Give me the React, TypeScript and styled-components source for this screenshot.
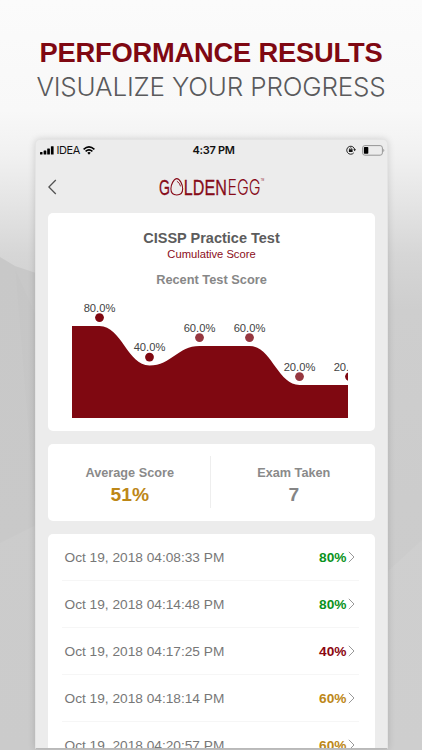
import React from "react";
import styled, { createGlobalStyle } from "styled-components";

const GlobalStyle = createGlobalStyle`
  * { box-sizing: border-box; }
  html, body { margin: 0; padding: 0; overflow: hidden; }
  body { font-family: "Liberation Sans", Arial, sans-serif; }
`;

const Page = styled.main`
  position: relative;
  width: 422px;
  height: 750px;
  overflow: hidden;
  display: flex;
  flex-direction: column;
  align-items: center;
  background: linear-gradient(180deg, #fbfbfb 0, #f8f8f8 110px, #f1f1f1 155px, #e4e4e4 205px, #d6d6d6 255px, #cecece 310px, #cccccc 500px, #cbcbcb 750px);
`;

const Backdrop = styled.svg`
  position: absolute;
  inset: 0;
`;

const Heading = styled.header`
  position: relative;
  height: 139px;
  padding-top: 36px;
  display: flex;
  flex-direction: column;
  align-items: center;
  flex: none;
  white-space: nowrap;
`;

const Title = styled.h1`
  margin: 0;
  font-size: 27.3px;
  line-height: 34px;
  letter-spacing: -0.2px;
  font-weight: 700;
  color: #7f0812;
`;

const Subtitle = styled.p`
  margin: 0;
  font-family: Inter, "Liberation Sans", sans-serif;
  font-weight: 300;
  font-size: 26px;
  line-height: 34px;
  letter-spacing: -0.17px;
  color: #5a5a5c;
`;

const Phone = styled.section`
  position: relative;
  width: 353px;
  height: 610px;
  flex: none;
  overflow: hidden;
  padding: 0 12px;
  display: flex;
  flex-direction: column;
  border: 1px solid #e4e4e4;
  border-bottom: 1px solid #b9b9b9;
  border-radius: 5px 5px 0 0;
  background: #ececec;
  box-shadow: 0 0 7px rgba(0, 0, 0, 0.15);
`;

const StatusBar = styled.div`
  height: 20px;
  flex: none;
  margin: 0 -10px;
  display: grid;
  grid-template-columns: 1fr auto 1fr;
  align-items: center;
  color: #111;
  font: 400 11px/20px Inter, sans-serif;
`;

const Carrier = styled.div`
  display: flex;
  align-items: center;
  gap: 3px;
  padding-left: 2px;
`;

const CarrierName = styled.span`
  letter-spacing: -0.4px;
`;

const Time = styled.time`
  font-weight: 600;
  font-size: 11px;
  margin-left: 5px;
  letter-spacing: -0.3px;
`;

const Indicators = styled.div`
  display: flex;
  align-items: center;
  justify-content: flex-end;
  gap: 6px;
`;

const NavBar = styled.nav`
  height: 53px;
  flex: none;
  display: grid;
  grid-template-columns: 24px 1fr 24px;
  align-items: center;
`;

const BackButton = styled.button`
  border: 0;
  padding: 0;
  background: none;
  display: flex;
`;

const Logo = styled.svg`
  justify-self: center;
  overflow: visible;
`;

const Card = styled.section<{ $height: number; $last?: boolean }>`
  height: ${(p) => p.$height}px;
  flex: none;
  margin-bottom: 13px;
  background: #fff;
  border-radius: ${(p) => (p.$last ? "5px 5px 0 0" : "5px")};
  overflow: hidden;
`;

const ChartCard = styled(Card)`
  display: flex;
  flex-direction: column;
  align-items: center;
  padding-top: 16px;
`;

const TestName = styled.h2`
  margin: 0 0 0 1px;
  font-size: 14.5px;
  line-height: 19px;
  color: #5c5c5c;
`;

const TestKind = styled.div`
  margin-left: 1px;
  font-size: 11.2px;
  line-height: 12px;
  color: #8b0d19;
`;

const ChartTitle = styled.h3`
  margin: 12px 0 0 1px;
  font-size: 12.8px;
  line-height: 16px;
  color: #878787;
`;

const Chart = styled.svg`
  margin-top: 12px;
  margin-right: 3px;
  display: block;
`;

const Stats = styled(Card)`
  display: grid;
  grid-template-columns: 1fr 1fr;
  padding: 12px 0 13px;
`;

const Stat = styled.div<{ $divided?: boolean }>`
  display: flex;
  flex-direction: column;
  align-items: center;
  padding-top: 9px;
  padding-left: 2px;
  border-right: ${(p) => (p.$divided ? "1px solid #eeeeee" : "0")};
`;

const StatLabel = styled.div`
  font-weight: 700;
  font-size: 12.7px;
  line-height: 16px;
  color: #8a8a8a;
`;

const StatValue = styled.div<{ $color: string }>`
  margin-top: 3px;
  font-weight: 700;
  font-size: 19.2px;
  line-height: 22px;
  color: ${(p) => p.$color};
`;

const Row = styled.div`
  height: 47px;
  margin: 0 16px 0 14px;
  padding: 0 4px 0 3px;
  display: flex;
  align-items: center;
  border-bottom: 1px solid #f6f6f6;
`;

const TakenAt = styled.span`
  flex: 1;
  font-size: 13.7px;
  color: #777;
`;

const Score = styled.span<{ $color: string }>`
  font-weight: 700;
  font-size: 13.7px;
  margin-right: 1px;
  color: ${(p) => p.$color};
`;

const points = [
  { x: 27.5, y: 26, label: "80.0%", faded: false },
  { x: 77.5, y: 65.5, label: "40.0%", faded: false },
  { x: 127.5, y: 46, label: "60.0%", faded: true },
  { x: 177.5, y: 46, label: "60.0%", faded: true },
  { x: 227.5, y: 85, label: "20.0%", faded: true },
  { x: 277.5, y: 85, label: "20.0%", faded: false },
];

const areaPath =
  `M0 118V26H${points[0].x}` +
  points
    .slice(1)
    .map((p, i) => `C${points[i].x + 22} ${points[i].y} ${p.x - 22} ${p.y} ${p.x} ${p.y}`)
    .join("") +
  "V118Z";

const attempts = [
  { time: "Oct 19, 2018 04:08:33 PM", score: "80%", color: "#0a931c" },
  { time: "Oct 19, 2018 04:14:48 PM", score: "80%", color: "#0a931c" },
  { time: "Oct 19, 2018 04:17:25 PM", score: "40%", color: "#8b0610" },
  { time: "Oct 19, 2018 04:18:14 PM", score: "60%", color: "#bd8717" },
  { time: "Oct 19, 2018 04:20:57 PM", score: "60%", color: "#bd8717" },
];

function GoldenEggLogo() {
  return (
    <Logo width="106" height="28" viewBox="0 0 106 28" fill="#870b19" fontFamily="Liberation Sans, Arial, sans-serif" fontSize="22.5">
      <text x="1" y="22.3" textLength="11" lengthAdjust="spacingAndGlyphs" stroke="#870b19" strokeWidth=".3">G</text>
      <path d="M18.8 5.6C15.8 5.6 12.9 11.6 12.9 15.8C12.9 19.6 15.3 22 18.8 22S24.7 19.6 24.7 15.8C24.7 11.6 21.8 5.6 18.8 5.6Z" fill="none" stroke="#870b19" strokeWidth="1.1" />
      <path d="M18.9 8.2Q21.8 9.7 22.6 13.4" fill="none" stroke="#870b19" strokeWidth=".9" />
      <text x="25.8" y="22.3" textLength="43" lengthAdjust="spacingAndGlyphs" stroke="#870b19" strokeWidth=".3">LDEN</text>
      <text x="69.6" y="22.3" textLength="33" lengthAdjust="spacingAndGlyphs" fontFamily="Inter, sans-serif" fontWeight="300" fontSize="21.8">EGG</text>
      <text x="102.8" y="8.4" fontSize="3" textLength="3.2" lengthAdjust="spacingAndGlyphs">TM</text>
    </Logo>
  );
}

export default function App() {
  return (
    <>
      <GlobalStyle />
      <Page>
        <Backdrop width="422" height="750" viewBox="0 0 422 750">
          <defs>
            <linearGradient id="facet" x1="0" y1="0" x2="0" y2="1">
              <stop offset="0" stopColor="#c8c8c8" />
              <stop offset="1" stopColor="#c9c9c9" />
            </linearGradient>
          </defs>
          <path d="M0 257L15 266L36 273V525L0 543Z" fill="url(#facet)" />
          <path d="M15 268L36 315V525L25 390Z" fill="#000" opacity=".008" />
          <path d="M387 572L422 540V750H387Z" fill="#fff" opacity=".06" />
        </Backdrop>
        <Heading>
          <Title>PERFORMANCE RESULTS</Title>
          <Subtitle>VISUALIZE YOUR PROGRESS</Subtitle>
        </Heading>
        <Phone>
          <StatusBar>
            <Carrier>
              <svg width="14" height="9" viewBox="0 0 14 9" fill="#000">
                <rect x="0" y="6" width="2.5" height="2.5" rx=".5" />
                <rect x="3.6" y="4.5" width="2.7" height="4" rx=".5" />
                <rect x="7.2" y="2.4" width="2.7" height="6.1" rx=".5" />
                <rect x="10.9" y="0.3" width="2.7" height="8.2" rx=".5" />
              </svg>
              <CarrierName>IDEA</CarrierName>
              <svg width="12" height="9" viewBox="0 0 12 9" fill="none" stroke="#000" strokeWidth="1.6">
                <path d="M.6 3.3Q6-1.5 11.4 3.3" />
                <path d="M2.6 5.4Q6 2.5 9.4 5.4" />
                <path d="M4.3 6.8Q6 5.4 7.7 6.8L6 8.7Z" fill="#000" stroke="none" />
              </svg>
            </Carrier>
            <Time>4:37 PM</Time>
            <Indicators>
              <svg width="10" height="10" viewBox="0 0 10 10" fill="none" stroke="#111">
                <path d="M7.8 7.8A4 4 0 1 1 8.7 4.7" strokeWidth=".9" />
                <path d="M7.3 4.3H10L8.7 6.2Z" fill="#111" stroke="none" />
                <rect x="2.9" y="4.3" width="3.7" height="2.7" fill="#111" stroke="none" />
                <path d="M3.6 4.5V3.6Q4.75 1.8 5.9 3.6V4.5" strokeWidth=".7" />
              </svg>
              <svg width="23" height="11" viewBox="0 0 23 11">
                <rect x=".6" y=".6" width="19.8" height="9.6" rx="2.3" fill="none" stroke="#969696" />
                <rect x="1.9" y="2" width="4.4" height="6.8" rx=".7" fill="#000" />
                <path d="M21.3 3.7Q23.4 5.4 21.3 7.1Z" fill="#969696" />
              </svg>
            </Indicators>
          </StatusBar>
          <NavBar>
            <BackButton aria-label="Back">
              <svg width="9" height="16" viewBox="0 0 9 16" fill="none" stroke="#555" strokeWidth="1.3">
                <path d="M7.8 1L.9 8L7.8 15" />
              </svg>
            </BackButton>
            <GoldenEggLogo />
          </NavBar>
          <ChartCard $height={218}>
            <TestName>CISSP Practice Test</TestName>
            <TestKind>Cumulative Score</TestKind>
            <ChartTitle>Recent Test Score</ChartTitle>
            <Chart width="276" height="118" viewBox="0 0 276 118">
              <path d={areaPath} fill="#7f0811" />
              {points.map((p) => (
                <g key={p.x}>
                  <circle cx={p.x} cy={p.y - 8.4} r="4.4" fill={p.faded ? "#963740" : "#7f0811"} />
                  <text x={p.x} y={p.y - 14.5} textAnchor="middle" fontFamily="Liberation Sans, sans-serif" fontSize="11.2" fill="#444">{p.label}</text>
                </g>
              ))}
            </Chart>
          </ChartCard>
          <Stats $height={77}>
            <Stat $divided>
              <StatLabel>Average Score</StatLabel>
              <StatValue $color="#bd8717">51%</StatValue>
            </Stat>
            <Stat>
              <StatLabel>Exam Taken</StatLabel>
              <StatValue $color="#858585">7</StatValue>
            </Stat>
          </Stats>
          <Card $height={215} $last>
            {attempts.map((a) => (
              <Row key={a.time}>
                <TakenAt>{a.time}</TakenAt>
                <Score $color={a.color}>{a.score}</Score>
                <svg width="7" height="12" viewBox="0 0 7 12" fill="none" stroke="#999" strokeWidth="1">
                  <path d="M.8 .8L6 6L.8 11.2" />
                </svg>
              </Row>
            ))}
          </Card>
        </Phone>
      </Page>
    </>
  );
}
